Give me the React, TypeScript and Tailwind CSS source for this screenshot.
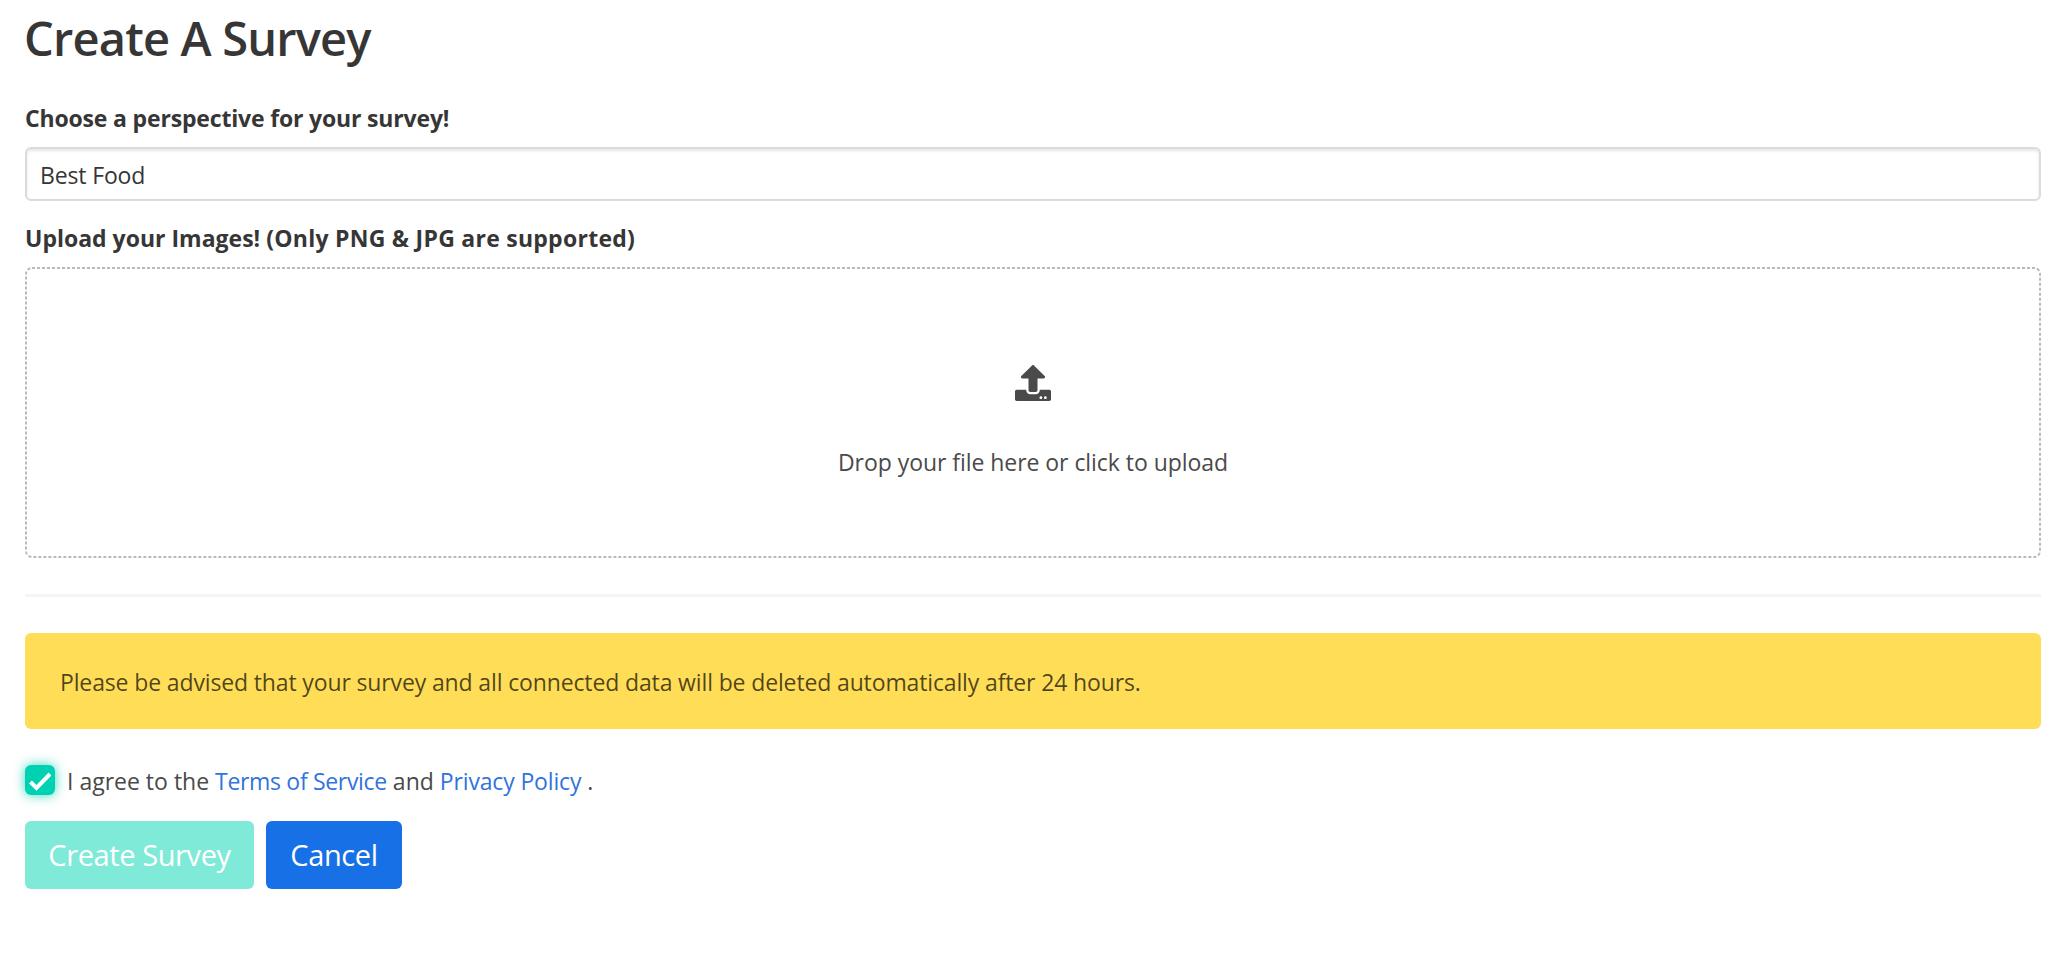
import { FaUpload } from "react-icons/fa";

export default function App() {
  return (
    <main className="min-h-[970px] bg-white pr-[23px] pl-[25px] font-['Open_Sans','Noto_Sans',sans-serif] text-[23px] leading-9 text-[#4a4a4a]">
      <h1 className="-ml-px h-[99px] pt-[11px] text-[47px] leading-[54px] font-semibold tracking-[-0.82px] text-[#363636]">
        Create A Survey
      </h1>
      <label className="block h-12 pt-px font-bold tracking-[-0.17px] text-[#363636]">
        Choose a perspective for your survey!
      </label>
      <input
        defaultValue="Best Food"
        className="block h-[54px] w-full rounded-md border-2 border-[#dbdbdb] px-[13px] pt-0.5 tracking-[-0.15px] text-[#363636] shadow-[inset_0_2px_3px_rgba(10,10,10,0.1)] outline-none"
      />
      <label className="mt-[18px] block h-12 pt-px font-bold text-[#363636]">
        Upload your Images!{" "}
        <span className="tracking-[0.26px]">(Only PNG &amp; JPG are supported)</span>
      </label>
      <section className="relative flex h-[291px] flex-col items-center pt-[98px]">
        <svg className="absolute inset-0" width="2016" height="291" fill="none">
          <rect x="1" y="1" width="2014" height="289" rx="6" stroke="#bababa" strokeWidth="2" strokeDasharray="3 2" />
        </svg>
        <FaUpload className="size-9" />
        <p className="mt-[43px] tracking-[-0.05px]">Drop your file here or click to upload</p>
      </section>
      <hr className="mt-9 h-[3px] border-0 bg-[#f5f5f5]" />
      <div className="mt-9 flex h-24 items-center rounded-md bg-[#ffdd57] px-[35px] pt-0.5 tracking-[-0.135px] text-black/70">
        <p>Please be advised that your survey and all connected data will be deleted automatically after 24 hours.</p>
      </div>
      <label className="mt-9 flex h-[30px] items-center">
        <span className="flex size-[30px] items-center justify-center rounded-md bg-[#00d1b2] shadow-[0_0_12px_rgba(0,209,178,0.8)]">
          <svg viewBox="0 0 30 30" className="size-[30px]" fill="none" stroke="white" strokeWidth="4">
            <path d="M5.5 17 11.5 23 25 9" />
          </svg>
        </span>
        <span className="ml-3 pt-0.5">
          I agree to the <a className="tracking-[-0.32px] text-[#3273dc]">Terms of Service</a> and{" "}
          <a className="tracking-[-0.15px] text-[#3273dc]">Privacy Policy</a> .
        </span>
      </label>
      <div className="mt-[26px] flex gap-3 text-[29px] tracking-[-0.4px] text-white">
        <button className="h-[68px] w-[229px] rounded-md bg-[#80ead9]">Create Survey</button>
        <button className="h-[68px] w-[136px] rounded-md bg-[#1870e6]">Cancel</button>
      </div>
    </main>
  );
}
